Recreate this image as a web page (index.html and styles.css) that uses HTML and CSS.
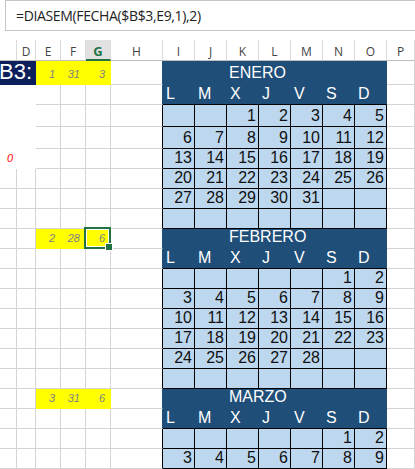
FILE: index.html
```html
<!DOCTYPE html>
<html>
<head>
<meta charset="utf-8">
<link rel="stylesheet" href="styles.css">
</head>
<body>
<div class="fxbar"><div class="fx">=DIASEM(FECHA($B$3,E9,1),2)</div></div>
<div class="sheet">
  <!-- column headers -->
  <div class="h"></div><div class="h">D</div><div class="h">E</div><div class="h">F</div><div class="h hsel">G</div><div class="h">H</div><div class="h">I</div><div class="h">J</div><div class="h">K</div><div class="h">L</div><div class="h">M</div><div class="h">N</div><div class="h">O</div><div class="h">P</div>

  <!-- row 3 -->
  <div class="c navy span2">B3:</div><div class="c y">1</div><div class="c y">31</div><div class="c y">3</div><div class="c ed"></div><div class="c hd"></div><div class="c hd"></div><div class="c hd mon">ENERO</div><div class="c"></div>
  <!-- row 4 -->
  <div class="c w"></div><div class="c w"></div><div class="c"></div><div class="c"></div><div class="c"></div><div class="c ed"></div><div class="c hd hl">L</div><div class="c hd hl">M</div><div class="c hd hl">X</div><div class="c hd hl">J</div><div class="c hd hl">V</div><div class="c hd hl">S</div><div class="c hd hl">D</div><div class="c"></div>
  <!-- row 5 -->
  <div class="c w"></div><div class="c w"></div><div class="c"></div><div class="c"></div><div class="c"></div><div class="c ek"></div><div class="c wk"></div><div class="c wk"></div><div class="c wk">1</div><div class="c wk">2</div><div class="c wk">3</div><div class="c wk">4</div><div class="c wk">5</div><div class="c"></div>
  <!-- row 6 -->
  <div class="c w"></div><div class="c w"></div><div class="c"></div><div class="c"></div><div class="c"></div><div class="c ek"></div><div class="c wk">6</div><div class="c wk">7</div><div class="c wk">8</div><div class="c wk">9</div><div class="c wk">10</div><div class="c wk">11</div><div class="c wk">12</div><div class="c"></div>
  <!-- row 7 -->
  <div class="c w zero">0</div><div class="c w"></div><div class="c"></div><div class="c"></div><div class="c"></div><div class="c ek"></div><div class="c wk">13</div><div class="c wk">14</div><div class="c wk">15</div><div class="c wk">16</div><div class="c wk">17</div><div class="c wk">18</div><div class="c wk">19</div><div class="c"></div>
  <!-- row 8 -->
  <div class="c"></div><div class="c"></div><div class="c"></div><div class="c"></div><div class="c"></div><div class="c ek"></div><div class="c wk">20</div><div class="c wk">21</div><div class="c wk">22</div><div class="c wk">23</div><div class="c wk">24</div><div class="c wk">25</div><div class="c wk">26</div><div class="c"></div>
  <!-- row 9 -->
  <div class="c"></div><div class="c"></div><div class="c"></div><div class="c"></div><div class="c"></div><div class="c ek"></div><div class="c wk">27</div><div class="c wk">28</div><div class="c wk">29</div><div class="c wk">30</div><div class="c wk">31</div><div class="c wk"></div><div class="c wk"></div><div class="c"></div>
  <!-- row 10 -->
  <div class="c"></div><div class="c"></div><div class="c"></div><div class="c"></div><div class="c"></div><div class="c ek"></div><div class="c wk"></div><div class="c wk"></div><div class="c wk"></div><div class="c wk"></div><div class="c wk"></div><div class="c wk"></div><div class="c wk"></div><div class="c"></div>
  <!-- row 11 -->
  <div class="c"></div><div class="c"></div><div class="c y">2</div><div class="c y">28</div><div class="c y sel">6</div><div class="c ed"></div><div class="c hd"></div><div class="c hd"></div><div class="c hd mon">FEBRERO</div><div class="c"></div>
  <!-- row 12 -->
  <div class="c"></div><div class="c"></div><div class="c"></div><div class="c"></div><div class="c"></div><div class="c ed"></div><div class="c hd hl">L</div><div class="c hd hl">M</div><div class="c hd hl">X</div><div class="c hd hl">J</div><div class="c hd hl">V</div><div class="c hd hl">S</div><div class="c hd hl">D</div><div class="c"></div>
  <!-- row 13 -->
  <div class="c"></div><div class="c"></div><div class="c"></div><div class="c"></div><div class="c"></div><div class="c ek"></div><div class="c wk"></div><div class="c wk"></div><div class="c wk"></div><div class="c wk"></div><div class="c wk"></div><div class="c wk">1</div><div class="c wk">2</div><div class="c"></div>
  <!-- row 14 -->
  <div class="c"></div><div class="c"></div><div class="c"></div><div class="c"></div><div class="c"></div><div class="c ek"></div><div class="c wk">3</div><div class="c wk">4</div><div class="c wk">5</div><div class="c wk">6</div><div class="c wk">7</div><div class="c wk">8</div><div class="c wk">9</div><div class="c"></div>
  <!-- row 15 -->
  <div class="c"></div><div class="c"></div><div class="c"></div><div class="c"></div><div class="c"></div><div class="c ek"></div><div class="c wk">10</div><div class="c wk">11</div><div class="c wk">12</div><div class="c wk">13</div><div class="c wk">14</div><div class="c wk">15</div><div class="c wk">16</div><div class="c"></div>
  <!-- row 16 -->
  <div class="c"></div><div class="c"></div><div class="c"></div><div class="c"></div><div class="c"></div><div class="c ek"></div><div class="c wk">17</div><div class="c wk">18</div><div class="c wk">19</div><div class="c wk">20</div><div class="c wk">21</div><div class="c wk">22</div><div class="c wk">23</div><div class="c"></div>
  <!-- row 17 -->
  <div class="c"></div><div class="c"></div><div class="c"></div><div class="c"></div><div class="c"></div><div class="c ek"></div><div class="c wk">24</div><div class="c wk">25</div><div class="c wk">26</div><div class="c wk">27</div><div class="c wk">28</div><div class="c wk"></div><div class="c wk"></div><div class="c"></div>
  <!-- row 18 -->
  <div class="c"></div><div class="c"></div><div class="c"></div><div class="c"></div><div class="c"></div><div class="c ek"></div><div class="c wk"></div><div class="c wk"></div><div class="c wk"></div><div class="c wk"></div><div class="c wk"></div><div class="c wk"></div><div class="c wk"></div><div class="c"></div>
  <!-- row 19 -->
  <div class="c"></div><div class="c"></div><div class="c y">3</div><div class="c y">31</div><div class="c y">6</div><div class="c ed"></div><div class="c hd"></div><div class="c hd"></div><div class="c hd mon">MARZO</div><div class="c"></div>
  <!-- row 20 -->
  <div class="c"></div><div class="c"></div><div class="c"></div><div class="c"></div><div class="c"></div><div class="c ed"></div><div class="c hd hl">L</div><div class="c hd hl">M</div><div class="c hd hl">X</div><div class="c hd hl">J</div><div class="c hd hl">V</div><div class="c hd hl">S</div><div class="c hd hl">D</div><div class="c"></div>
  <!-- row 21 -->
  <div class="c"></div><div class="c"></div><div class="c"></div><div class="c"></div><div class="c"></div><div class="c ek"></div><div class="c wk"></div><div class="c wk"></div><div class="c wk"></div><div class="c wk"></div><div class="c wk"></div><div class="c wk">1</div><div class="c wk">2</div><div class="c"></div>
  <!-- row 22 -->
  <div class="c"></div><div class="c"></div><div class="c"></div><div class="c"></div><div class="c"></div><div class="c ek"></div><div class="c wk">3</div><div class="c wk">4</div><div class="c wk">5</div><div class="c wk">6</div><div class="c wk">7</div><div class="c wk">8</div><div class="c wk">9</div><div class="c"></div>
</div>
</body>
</html>
```
FILE: styles.css
```css
* { box-sizing: border-box; }
html, body { margin: 0; padding: 0; background: #fff; }
body { width: 415px; height: 469px; overflow: hidden; }

.fxbar { height: 40px; padding-left: 5px; }
.fx {
  height: 31px;
  border: 1px solid #c6c6c6;
  border-right: none;
  padding-left: 10px;
  display: flex;
  align-items: center;
  font-family: "Open Sans", sans-serif;
  font-size: 14px;
  letter-spacing: -0.35px;
  color: #222;
  white-space: nowrap;
}

.sheet {
  display: grid;
  grid-template-columns: 17px 19px 25px 25px 25px 52px repeat(7, 32px) 1fr;
  grid-template-rows: 21px 24px 20px 22px 22px repeat(16, 20px);
}

.h {
  border-right: 1px solid #dadada;
  border-bottom: 1px solid #bfbfbf;
  font-family: "Open Sans", sans-serif;
  font-size: 12px;
  color: #444;
  display: flex;
  align-items: flex-end;
  justify-content: center;
  padding-bottom: 2px;
  line-height: 1;
}
.h.hsel {
  background: #e1e1e1;
  color: #217346;
  font-weight: bold;
  font-size: 13px;
  border-bottom: 2px solid #217346;
  padding-bottom: 1px;
}

.c {
  border-right: 1px solid #d4d4d4;
  border-bottom: 1px solid #d4d4d4;
  position: relative;
  display: flex;
  align-items: flex-end;
  line-height: 1;
  white-space: nowrap;
}

.span2 { grid-column: span 2; }
.navy {
  background: #0b1f5c;
  border-color: #0b1f5c;
  color: #fff;
  font-family: "Liberation Sans Narrow", "Liberation Sans", sans-serif;
  font-size: 22px;
  justify-content: flex-end;
  padding-right: 3px;
  padding-bottom: 1px;
  overflow: hidden;
}

.w { border-color: #fff; }
.zero {
  color: #ff0000;
  font-style: italic;
  font-family: "Liberation Sans", sans-serif;
  font-size: 11px;
  justify-content: flex-end;
  padding-right: 3px;
  padding-bottom: 4px;
}

.y {
  background: #ffff00;
  border-color: #ffff00;
  color: #808080;
  font-style: italic;
  font-family: "Liberation Sans", sans-serif;
  font-size: 11px;
  justify-content: flex-end;
  padding-right: 5px;
  padding-bottom: 4px;
}
.sel::after {
  content: "";
  position: absolute;
  left: -2px; top: -2px; right: -1px; bottom: -1px;
  border: 2px solid #217346;
  box-shadow: inset 0 0 0 1px #fff;
}
.sel::before {
  content: "";
  position: absolute;
  right: -3px; bottom: -3px;
  width: 6px; height: 6px;
  background: #217346;
  border: 1px solid #fff;
  z-index: 2;
}

.ed { border-right-color: #1f4e78; }
.ek { border-right-color: #000; }

.hd {
  background: #1f4e78;
  border-color: #1f4e78;
  color: #fff;
  font-family: "Liberation Sans Narrow", "Liberation Sans", sans-serif;
  font-size: 16px;
}
.hd.hl {
  border-bottom-color: #000;
  font-size: 16px;
  padding-left: 3px;
  padding-bottom: 2px;
}
.mon {
  grid-column: span 5;
  padding-left: 2px;
  padding-bottom: 3px;
}

.wk {
  background: #bdd7ee;
  border-color: #000;
  color: #111;
  font-family: "Liberation Sans Narrow", "Liberation Sans", sans-serif;
  font-size: 16px;
  justify-content: flex-end;
  padding-right: 2px;
  padding-bottom: 2px;
}
```
